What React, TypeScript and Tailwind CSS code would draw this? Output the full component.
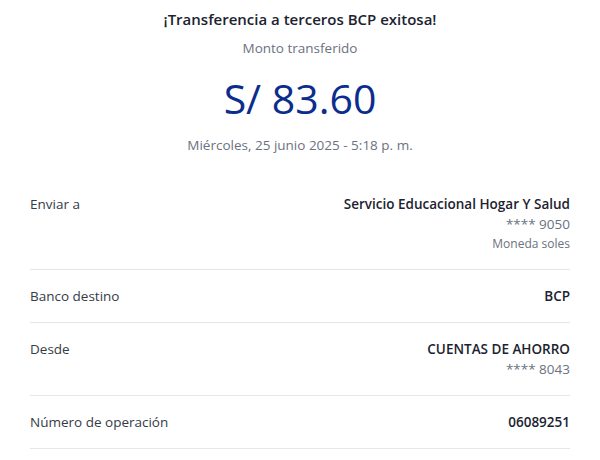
import React from 'react';

const rows = [
  { label: "Enviar a", value: "Servicio Educacional Hogar Y Salud", extra: ["**** 9050", "Moneda soles"] },
  { label: "Banco destino", value: "BCP", extra: [] },
  { label: "Desde", value: "CUENTAS DE AHORRO", extra: ["**** 8043"] },
  { label: "Número de operación", value: "06089251", extra: [] },
];

export default function App() {
  return (
    <div className="w-[600px] h-[460px] bg-white overflow-hidden font-['Open_Sans',sans-serif]">
      {/* Cabecera */}
      <div className="flex flex-col items-center pt-[8px]">
        <h1 className="text-[15px] leading-[22px] font-semibold text-[#1c2330]">
          ¡Transferencia a terceros BCP exitosa!
        </h1>
        <p className="mt-[8px] text-[13.5px] leading-[20px] text-[#6b7280]">Monto transferido</p>
        <p className="mt-[18px] text-[41px] leading-[44px] text-[#0b2d8c]">S/ 83.60</p>
        <p className="mt-[15px] text-[13.5px] leading-[20px] text-[#6b7280]">
          Miércoles, 25 junio 2025 - 5:18 p. m.
        </p>
      </div>

      {/* Detalle */}
      <div className="mx-[30px] mt-[23px]">
        {rows.map((row) => (
          <div
            key={row.label}
            className="flex justify-between py-[16px] border-b border-[#e5e7eb]"
          >
            <span className="text-[13.5px] leading-[20px] text-[#353b47]">{row.label}</span>
            <div className="flex flex-col items-end">
              <span className="text-[13.5px] leading-[20px] font-semibold text-[#1c2330]">{row.value}</span>
              {row.extra.map((e, i) => (
                <span
                  key={e}
                  className={
                    i === 0
                      ? "text-[13.5px] leading-[20px] text-[#6b7280]"
                      : "text-[12px] leading-[19px] text-[#6b7280]"
                  }
                >
                  {e}
                </span>
              ))}
            </div>
          </div>
        ))}
      </div>
    </div>
  );
}
